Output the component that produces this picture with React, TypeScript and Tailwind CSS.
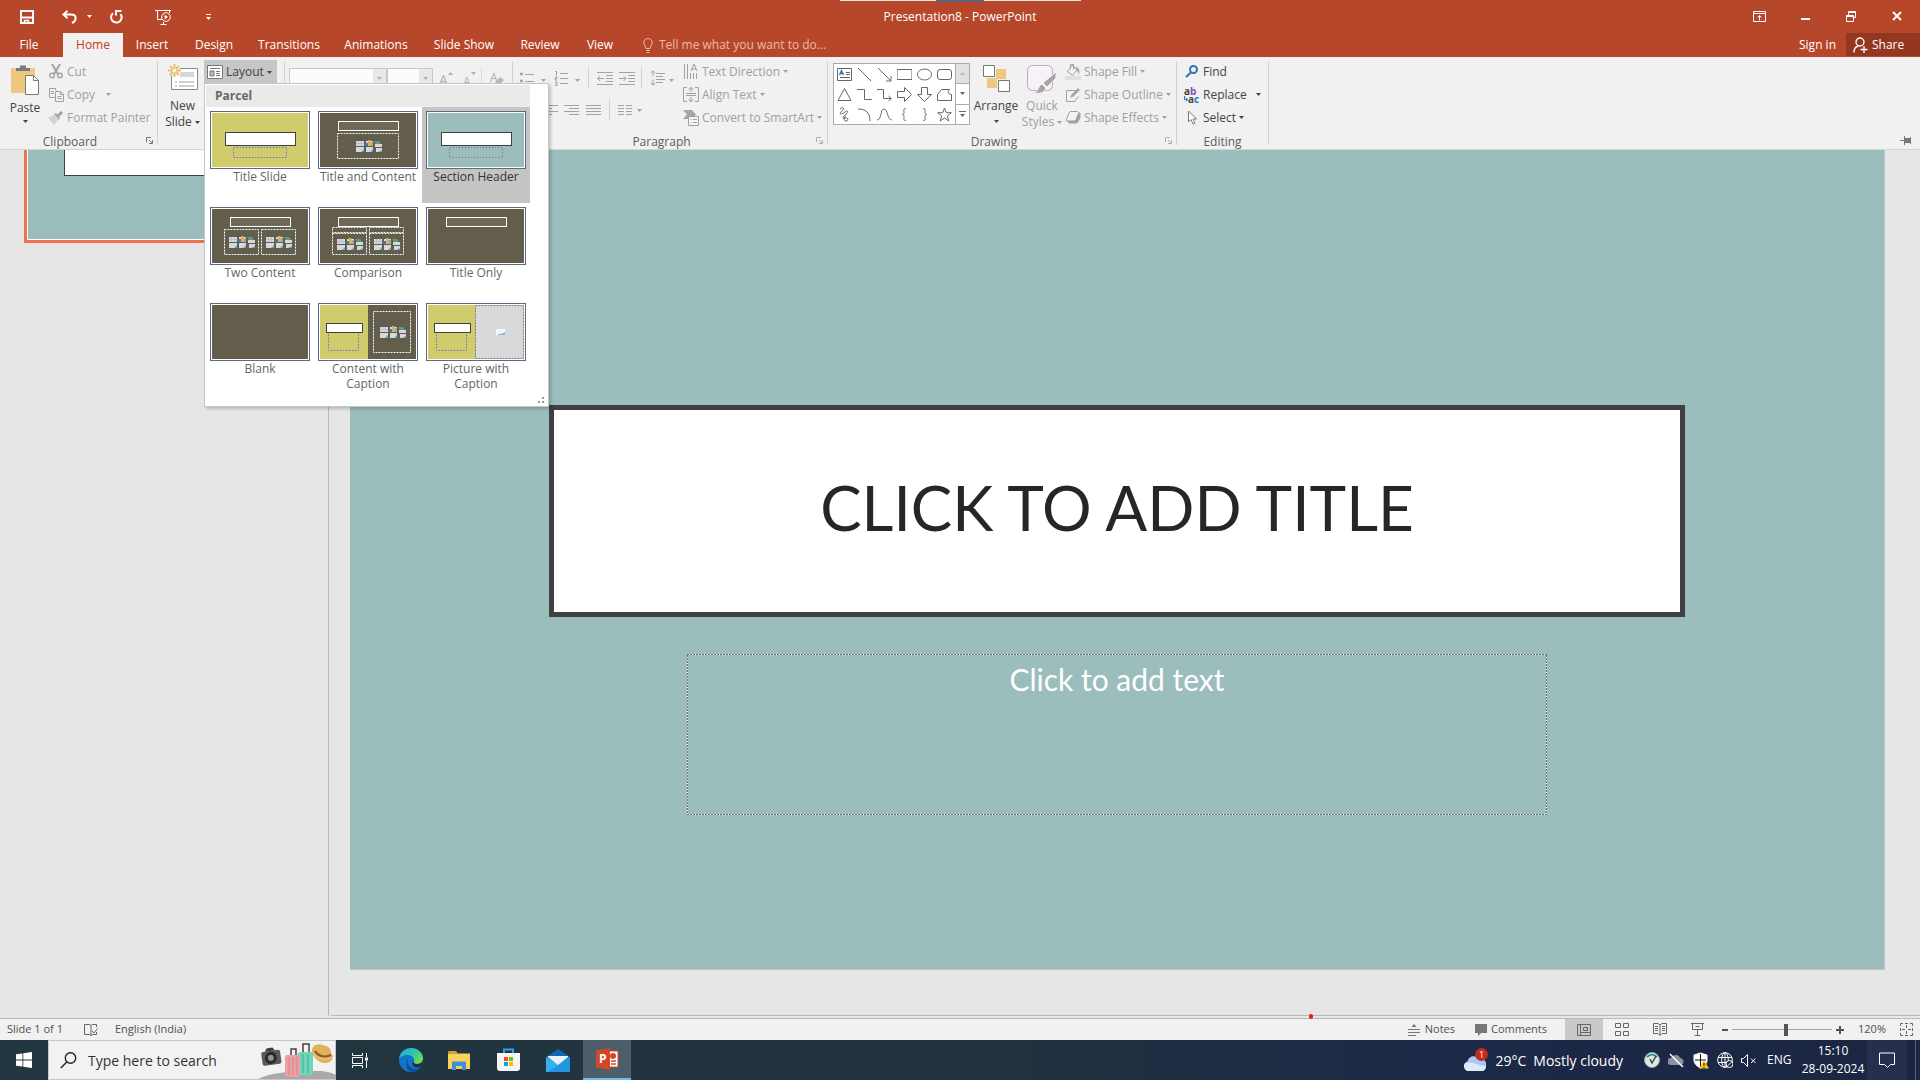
import type { ReactNode } from 'react';

type P = { children?: ReactNode };

function Svg({ w, h, children, stroke = 'currentColor', sw = 1, cls = '' }: P & { w: number; h: number; stroke?: string; sw?: number; cls?: string }) {
  return (
    <svg width={w} height={h} viewBox={`0 0 ${w} ${h}`} fill="none" stroke={stroke} strokeWidth={sw} className={`shrink-0 ${cls}`} aria-hidden="true">
      {children}
    </svg>
  );
}

function Caret({ cls = '' }: { cls?: string }) {
  return (
    <svg width="5" height="3" viewBox="0 0 5 3" className={`shrink-0 ${cls}`} aria-hidden="true">
      <path d="M0 0h5L2.5 3z" fill="currentColor" />
    </svg>
  );
}

function Launcher() {
  return (
    <Svg w={7} h={7}>
      <path d="M.5 5V.5H5M3 3l3 3M6.5 3v3.5H3" />
    </Svg>
  );
}

/* ---------- title bar and tabs ---------- */

function TitleBar() {
  return (
    <header className="relative grid h-[33px] shrink-0 grid-cols-[1fr_auto_1fr] items-center bg-[#b7472a] text-white">
      <div className="absolute left-[840px] top-0 flex h-px w-[241px] bg-[#e4e4e4]">
        <span className="ml-[96px] h-px w-12 bg-[#0a78d7]" />
      </div>
      <div className="flex items-center pl-5">
        <button aria-label="Save" className="mr-7">
          <Svg w={14} h={14} sw={2}>
            <path d="M1 1h12v12H1zM1 7.5h12" />
            <path d="M4.5 13v-2.5h4V13" strokeWidth="1.5" />
          </Svg>
        </button>
        <button aria-label="Undo" className="mr-[10px]">
          <Svg w={15} h={14} sw={2}>
            <path d="M5.5.8L1.5 4.500l4 3.700M2 4.500h7c6 0 6 6 1 8.500" />
          </Svg>
        </button>
        <button aria-label="Undo options" className="mr-[17px]"><Caret /></button>
        <button aria-label="Repeat" className="mr-[32px]">
          <Svg w={14} h={14} sw={2}>
            <path d="M4 3.200A5.300 5.300 0 1 0 11.500 4M7 5.500V1h5.500" />
          </Svg>
        </button>
        <button aria-label="Start from beginning" className="mr-[34px]">
          <Svg w={17} h={16}>
            <path d="M0 1.500h16M2.500 2v8.500H7M8.500 13v2M5.500 15.500h6M14.500 2v2" />
            <circle cx="11" cy="8" r="4.300" />
            <path d="M9.700 5.800v4.400L13 8z" fill="currentColor" stroke="none" />
          </Svg>
        </button>
        <button aria-label="Customize quick access" className="flex flex-col gap-[2px]">
          <span className="h-px w-[5px] bg-white" />
          <Caret />
        </button>
      </div>
      <h1 className="text-[12px]">Presentation8 - PowerPoint</h1>
      <div className="flex justify-end">
        <button aria-label="Ribbon display options" className="flex w-[46px] justify-center">
          <Svg w={13} h={11}>
            <path d="M.5.5h12v10H.5zM.5 2.500h12M6.500 9.500V5M4.500 6.500l2-2 2 2" />
          </Svg>
        </button>
        <button aria-label="Minimize" className="flex w-[46px] justify-center">
          <Svg w={9} h={11} sw={2}><path d="M0 8h9" /></Svg>
        </button>
        <button aria-label="Restore" className="flex w-[46px] justify-center">
          <Svg w={10} h={11}>
            <path d="M.5 4.500h7v6h-7zM2.500 4V.5h7v6H8M.5 5.500h7M2.500 1.500h7" />
          </Svg>
        </button>
        <button aria-label="Close" className="flex w-[46px] justify-center">
          <Svg w={10} h={10} sw={2}><path d="M1 1l8 8M9 1l-8 8" /></Svg>
        </button>
      </div>
    </header>
  );
}

const tabs = [
  { name: 'File', cls: 'w-[58px] mr-[5px]' },
  { name: 'Home', cls: 'w-[60px] bg-[#f1f1f1] text-[#c43e1c]' },
  { name: 'Insert', cls: 'w-[58px]' },
  { name: 'Design', cls: 'w-[66px]' },
  { name: 'Transitions', cls: 'w-[84px]' },
  { name: 'Animations', cls: 'w-[90px]' },
  { name: 'Slide Show', cls: 'w-[86px]' },
  { name: 'Review', cls: 'w-[66px]' },
  { name: 'View', cls: 'w-[54px]' },
];

function TabRow() {
  return (
    <nav className="flex h-6 shrink-0 bg-[#b7472a] text-[12px] text-white">
      {tabs.map((t) => (
        <button key={t.name} className={`shrink-0 ${t.cls}`}>{t.name}</button>
      ))}
      <label className="ml-4 flex items-center gap-[6px] text-[#efb9a8]">
        <Svg w={10} h={15}>
          <path d="M3 10.500C3 8.500.8 7.500.8 4.700a4.200 4.200 0 0 1 8.400 0C9.200 7.500 7 8.500 7 10.500zM3 12.500h4M3.500 14.500h3" />
        </Svg>
        <input aria-label="Tell me" placeholder="Tell me what you want to do..." className="w-[200px] bg-transparent outline-none placeholder:text-[#efb9a8]" />
      </label>
      <div className="ml-auto flex">
        <button className="px-[10px]">Sign in</button>
        <button className="mb-px flex w-[74px] items-center gap-1 bg-[#943721] pl-[7px]">
          <Svg w={15} h={16} sw={1.300}>
            <circle cx="7" cy="5" r="4" />
            <path d="M1 15.500c0-4 2-6 4.500-6.500M11 9v7M7.500 12.500h7" />
          </Svg>
          Share
        </button>
      </div>
    </nav>
  );
}

/* ---------- ribbon ---------- */

function Group({ label, cls, labelCls = '', launcher = '', children }: P & { label: string; cls: string; labelCls?: string; launcher?: string }) {
  return (
    <section className={`flex shrink-0 flex-col pt-[3px] ${cls}`}>
      <div className="flex h-[69px]">{children}</div>
      <div className="relative mt-auto h-4 text-center leading-[18px] text-[#5c5c5c]">
        <span className={labelCls}>{label}</span>
        {launcher && (
          <button aria-label={`${label} options`} className={`absolute right-1 top-1 ${launcher}`}><Launcher /></button>
        )}
      </div>
    </section>
  );
}

const Sep = () => <div className="my-1 w-px shrink-0 bg-[#d2d2d2]" />;

function Row({ icon, text, caret, cls = 'text-[#a0a0a0]', caretCls = '' }: { icon: ReactNode; text: string; caret?: boolean; cls?: string; caretCls?: string }) {
  return (
    <button className={`flex h-[23px] items-center whitespace-nowrap ${cls}`}>
      <span className="mr-[3px] flex w-4 justify-center">{icon}</span>
      {text}
      {caret && <Caret cls={caretCls || 'ml-[3px]'} />}
    </button>
  );
}

function Clipboard() {
  return (
    <Group label="Clipboard" cls="w-[157px]" labelCls="mr-[17px]" launcher="text-[#777]">
      <button className="flex w-[48px] flex-col items-center pt-1 pl-[2px] text-[#444]">
        <Svg w={28} h={32}>
          <path d="M0 4h24v25H0z" fill="#edc87e" stroke="none" />
          <path d="M5 7V4h4V1.500h6V4h4v3z" fill="#7b7b7b" stroke="none" />
          <path d="M14.500 11.500h8l5 5v14h-13z" fill="#fff" stroke="#777" />
          <path d="M22.500 11.500v5h5" stroke="#777" />
        </Svg>
        <span className="mt-1 leading-4">Paste</span>
        <Caret cls="mt-1" />
      </button>
      <div>
        <Row
          text="Cut"
          icon={
            <Svg w={14} h={15} sw={1.300}>
              <path d="M3 0l6 10M11 0L5 10" strokeWidth="2" />
              <circle cx="3" cy="11.500" r="2.300" /><circle cx="11" cy="11.500" r="2.300" />
            </Svg>
          }
        />
        <Row
          text="Copy" caret caretCls="ml-[11px]"
          icon={
            <Svg w={15} h={14}>
              <path d="M7 .5H.5v9H6M.5.5h5l2 2M6.500 3.500h5l3 3v7h-8zM11.500 3.500v3h3M2 3.500h3M2 5.500h3M8.500 8.500h4M8.500 10.500h4" />
            </Svg>
          }
        />
        <Row
          text="Format Painter"
          icon={
            <Svg w={16} h={14}>
              <path d="M0 7l6-3 4 5-4 5z" fill="#d6d0d6" stroke="none" />
              <path d="M6 3l2-1 4 5-1.500 2z" fill="#aaa" stroke="none" />
              <path d="M10 5l4-4" strokeWidth="3" />
            </Svg>
          }
        />
      </div>
    </Group>
  );
}

function Slides() {
  return (
    <Group label="" cls="w-[126px]">
      <button className="flex w-[46px] flex-col items-center pt-1 pl-[3px] text-[#444]">
        <Svg w={30} h={28}>
          <path d="M3.500 4.500h26v21h-26z" fill="#fff" stroke="#8a8a8a" />
          <path d="M12 8h14v5H12z" fill="#d8d8d8" stroke="none" />
          <path d="M7 18h2M11 18h15M7 22h2M11 22h15" stroke="#a0a0a0" />
          <circle cx="6.500" cy="6.500" r="6" fill="#f1f1f1" stroke="none" />
          <path d="M6.500 0v13M0 6.500h13M2 2l9 9M11 2l-9 9" stroke="#efbd61" strokeWidth="1.800" />
          <circle cx="6.500" cy="6.500" r="2" fill="#f1f1f1" stroke="none" />
        </Svg>
        <span className="mt-1.5 leading-4">New</span>
        <span className="flex items-center gap-[3px] leading-4">Slide<Caret /></span>
      </button>
      <button className="flex h-[24px] w-[73px] items-center bg-[#c6c6c6] pl-[3px] text-[#444]">
        <Svg w={16} h={14} stroke="#777">
          <path d="M.5.500h15v13H.5z" fill="#fff" />
          <path d="M3 3.500h10M3 6h4v5H3z" fill="#bbb" />
          <path d="M9 6.500h4M9 8.500h4M9 10.500h4" />
        </Svg>
        <span className="ml-[3px] mr-[3px]">Layout</span><Caret />
      </button>
    </Group>
  );
}

function FontGroup() {
  return (
    <Group label="" cls="w-[227px]">
      <div className="flex h-7 items-start pt-2 pl-1 text-[#b0b0b0]">
        <div className="relative flex h-5 w-[98px] items-center border border-[#c8c8c8] bg-[#fcfcfc]">
          <select aria-label="Font" className="h-full w-full appearance-none" />
          <span className="pointer-events-none absolute right-0 flex h-full w-[13px] items-center justify-center bg-[#e8e8e8]"><Caret /></span>
        </div>
        <div className="relative flex h-5 w-[46px] items-center border border-[#c8c8c8] bg-[#fcfcfc]">
          <select aria-label="Font size" className="h-full w-full appearance-none" />
          <span className="pointer-events-none absolute right-0 flex h-full w-[13px] items-center justify-center bg-[#e8e8e8]"><Caret /></span>
        </div>
        <button aria-label="Increase font size" className="ml-[6px] mt-1 flex w-6 items-start text-[14px] leading-4">A<Svg w={5} h={3}><path d="M0 3l2.500-3L5 3z" fill="currentColor" stroke="none" /></Svg></button>
        <button aria-label="Decrease font size" className="mt-1 flex w-[18px] items-start text-[12px] leading-5">A<Caret /></button>
        <span className="h-5 w-px bg-[#d8d8d8]" />
        <button aria-label="Clear formatting" className="ml-2 mt-1 flex text-[12px] leading-3">A<Svg w={10} h={10} cls="-ml-1 mt-1"><path d="M1 6l5-5 4 3-5 5z" fill="#b8b8b8" stroke="none" /></Svg></button>
      </div>
    </Group>
  );
}

const lines = (w: number[], x = 0) => w.map((n, i) => <path key={i} d={`M${x} ${i * 3 + 0.5}h${n}`} />);

function Paragraph() {
  return (
    <Group label="Paragraph" cls="w-[314px]" labelCls="ml-[-17px]" launcher="text-[#b0b0b0]">
      <div className="w-[170px] shrink-0 pl-[7px] text-[#a3a3a3]">
        <div className="flex h-9 items-center">
          <Svg w={15} h={13}><path d="M0 2h3M0 9h3" strokeWidth="2.500" /><path d="M5 2.500h9M5 9.500h9" /></Svg>
          <Caret cls="ml-[6px] mt-1" />
          <Svg w={15} h={17} cls="ml-2">
            <path d="M6 3.500h8M6 8.500h8M6 13.500h8M1 1.500h1.500v4M1 7h2v1.500H1V10h2M1 12h2v3.500H1M1.500 13.500H3" />
          </Svg>
          <Caret cls="ml-[6px] mt-1" />
          <span className="mx-2 h-[22px] w-px bg-[#d2d2d2]" />
          <Svg w={16} h={13}><path d="M0 .5h16M9 3.500h7M9 6.500h7M9 9.500h7M0 12.500h16M0 6.500h7M3 4L.7 6.500 3 9" /></Svg>
          <Svg w={16} h={13} cls="ml-[6px]"><path d="M0 .5h16M9 3.500h7M9 6.500h7M9 9.500h7M0 12.500h16M0 6.500h7M4.500 4L7 6.500 4.500 9" /></Svg>
          <span className="mx-[6px] h-[22px] w-px shrink-0 bg-[#d2d2d2]" />
          <Svg w={15} h={16} cls="ml-[2px]"><path d="M6 3.500h9M6 6.500h7M6 9.500h9M6 12.500h7M3 1v5.500M.7 3L3 .8 5.300 3M3 9.500V15M.7 13L3 15.200 5.300 13" /></Svg>
          <Caret cls="ml-[4px] mt-1" />
        </div>
        <div className="flex h-7 items-center pl-[24px]">
          <Svg w={14} h={11}>{lines([14, 8, 14, 8])}</Svg>
          <Svg w={15} h={11} cls="ml-[6px]"><path d="M0 .5h15M5 3.500h10M0 6.500h15M5 9.500h10" /></Svg>
          <Svg w={15} h={11} cls="ml-[7px]"><path d="M0 .5h15M0 3.500h15M0 6.500h15M0 9.500h15" /></Svg>
          <span className="mx-2 h-[22px] w-px bg-[#d2d2d2]" />
          <Svg w={14} h={11}><path d="M0 .5h6M0 3.500h6M0 6.500h6M0 9.500h6M8 .5h6M8 3.500h6M8 6.500h6M8 9.500h6" /></Svg>
          <Caret cls="ml-[5px]" />
        </div>
      </div>
      <div>
        <Row text="Text Direction" caret icon={
          <Svg w={16} h={15}><path d="M1.500 0v15M4.500 0v15M7.500 9v6M10.500 9v6M13.500 9v6M8 7l3-7 3 7M9 5h4" /></Svg>
        } />
        <Row text="Align Text" caret icon={
          <Svg w={16} h={15}><path d="M4 .5H.5v14H4M12 .5h3.500v14H12M3 6.500h10M3 8.500h10M8 0v5M5.500 2.500L8 .5l2.500 2M8 10v5M5.500 12.500L8 14.500l2.500-2" /></Svg>
        } />
        <Row text="Convert to SmartArt" caret icon={
          <Svg w={16} h={16}>
            <path d="M0 0h9l4 4.500-4 4.500H0l4-4.500z" fill="#a6a6a6" stroke="none" />
            <path d="M5.500 6.500h10v9h-10z" fill="#f6f6f6" /><path d="M7.500 9.500h1M10 9.500h4M7.500 12.500h1M10 12.500h4" />
          </Svg>
        } />
      </div>
    </Group>
  );
}

const shapes: { name: string; art: ReactNode }[] = [
  { name: 'Text box', art: <><path d="M.5 1.500h14v12H.5zM9 5.500h4M9 7.500h4M3 10.500h10" /><path d="M2.500 8L4.500 3.500 6.500 8M3.500 6.500h2" stroke="#2b73b8" strokeWidth="1.300" /></> },
  { name: 'Line', art: <path d="M1 1l13 13" /> },
  { name: 'Arrow', art: <path d="M1 1l13 13M14 9v5H9" /> },
  { name: 'Rectangle', art: <path d="M0 2.500h15v10H0z" /> },
  { name: 'Oval', art: <ellipse cx="7.500" cy="7.500" rx="7" ry="5.500" /> },
  { name: 'Rounded rectangle', art: <rect x=".5" y="2.500" width="14" height="10" rx="2.500" /> },
  { name: 'Triangle', art: <path d="M7.500 1.500l6.500 12H1z" /> },
  { name: 'Elbow connector', art: <path d="M0 2.500h7.500v10H15" /> },
  { name: 'Elbow arrow', art: <path d="M0 2.500h6.500v9H14M11.500 9l2.800 2.500-2.800 2.500" /> },
  { name: 'Right arrow', art: <path d="M.5 4.500h7v-4l7 7-7 7v-4h-7z" /> },
  { name: 'Down arrow', art: <path d="M4.500.5v7h-4l7 7 7-7h-4v-7z" /> },
  { name: 'Freeform', art: <path d="M.5 13.500v-6l4-5h8c-2 3-2 4 2 5v6z" /> },
  { name: 'Scribble', art: <path d="M3 2c4-3 5 0 1 3-3 3 2 2 4 0s4-1 1 2-4 5-1 4 4 3 1 3-2-5 0-5" /> },
  { name: 'Arc', art: <path d="M1 2c8 0 12 4 12 12" /> },
  { name: 'Curve', art: <path d="M0 13c5 0 3-11 7-11s3 11 8 11" /> },
  { name: 'Left brace', art: <path d="M9 1.500c-3 0-2 2-2 4 0 1.500-1 2-2 2 1 0 2 .5 2 2 0 2-1 4 2 4" /> },
  { name: 'Right brace', art: <path d="M6 1.500c3 0 2 2 2 4 0 1.500 1 2 2 2-1 0-2 .5-2 2 0 2 1 4-2 4" /> },
  { name: 'Star', art: <path d="M7.500 1l1.800 4.700h5L10.300 9l1.500 5-4.300-3-4.300 3 1.500-5L.7 5.700h5z" /> },
];

function Drawing() {
  return (
    <Group label="Drawing" cls="w-[348px]" labelCls="mr-[16px]" launcher="text-[#b0b0b0]">
      <div className="ml-[5px] mt-[3px] flex h-[62px] w-[137px] shrink-0 border border-[#ababab] bg-white text-[#666]">
        <div className="grid flex-1 grid-cols-6 place-items-center px-px">
          {shapes.map((s) => (
            <button key={s.name} aria-label={s.name}><Svg w={15} h={15}>{s.art}</Svg></button>
          ))}
        </div>
        <div className="flex w-[14px] flex-col divide-y divide-[#ababab] border-l border-[#ababab]">
          <button aria-label="Scroll shapes up" className="flex flex-1 items-center justify-center bg-[#e1e1e1] text-[#b5b5b5]"><Caret cls="rotate-180" /></button>
          <button aria-label="Scroll shapes down" className="flex flex-1 items-center justify-center"><Caret /></button>
          <button aria-label="More shapes" className="flex flex-1 flex-col items-center justify-center gap-[2px]"><span className="h-px w-[7px] bg-[#666]" /><Caret /></button>
        </div>
      </div>
      <button className="ml-[3px] flex w-[46px] shrink-0 flex-col items-center pt-[5px] text-[#444]">
        <Svg w={27} h={27}>
          <path d="M13 4h10v10H13zM4 13h10v10H4z" fill="#edc87e" stroke="none" />
          <path d="M.5.500h11v11H.5zM15.500 15.500h11v11h-11z" fill="#fff" stroke="#777" />
        </Svg>
        <span className="mt-1.5 leading-4">Arrange</span>
        <Caret cls="mt-1.5" />
      </button>
      <button className="flex w-[46px] shrink-0 flex-col items-center pt-[5px] text-[#a0a0a0]">
        <Svg w={30} h={29} stroke="#b5adb5">
          <rect x=".5" y=".5" width="25" height="25" rx="5" fill="#f8f1f8" />
          <path d="M29 7v6l-9 9-4-4z" fill="#a8a3a8" stroke="#f1f1f1" />
          <path d="M15 19l4 4c-2 5-6 6-12 5 5-2 4-7 8-9z" fill="#a8a3a8" stroke="#f1f1f1" />
        </Svg>
        <span className="mt-1 leading-4">Quick</span>
        <span className="flex items-center gap-[3px] leading-4">Styles<Caret /></span>
      </button>
      <div>
        <Row text="Shape Fill" caret icon={
          <Svg w={16} h={16}><path d="M0 12h16v4H0z" fill="#e2dde2" stroke="none" /><path d="M7 1.500L2.500 7.500l5 4 5-6zM5.500 5V.5h3v5" /><path d="M10 3c4 0 5 3 4 8-1-3-1-4-3-5z" fill="#a5a5a5" stroke="none" /></Svg>
        } />
        <Row text="Shape Outline" caret icon={
          <Svg w={16} h={14}><path d="M11 2.500H1.500v11h8l4-5" /><path d="M5 10l1.500-3.500L13 0l2 2-6.500 6.500z" fill="#a5a5a5" stroke="none" /></Svg>
        } />
        <Row text="Shape Effects" caret icon={
          <Svg w={16} h={14}><path d="M3 9l3-7h9v5l-3 5H4z" fill="#a3a3a3" stroke="#a3a3a3" /><path d="M1 9l3-7c.5-1 1-1.500 2-1.500h6c1 0 2 1 1.500 2L11 8.500c-.5 1-1 1.500-2 1.500H2c-1 0-1-.5-1-1z" fill="#f5f0f5" /></Svg>
        } />
      </div>
    </Group>
  );
}

function Editing() {
  return (
    <Group label="Editing" cls="w-[91px]">
      <div className="pl-[7px]">
        <Row text="Find" cls="text-[#444]" icon={
          <Svg w={14} h={13} stroke="#2f74b5" sw={2}><circle cx="8.500" cy="4.500" r="3.500" /><path d="M6 7.500l-5 4.500" /></Svg>
        } />
        <Row text="Replace" caret caretCls="ml-[9px]" cls="text-[#444]" icon={
          <span className="flex h-4 w-4 flex-col text-[10px] font-bold leading-[8px]" aria-hidden="true">
            <span className="h-2 text-left">a<span className="text-[#8a4fb0]">b</span></span>
            <span className="flex h-2 items-start">
              <Svg w={4} h={6} stroke="#2f74b5" cls="mt-px"><path d="M.5 0v3.500H4M2 1.500l1.500 2-1.500 2" /></Svg>
              <span>a<span className="text-[#2f74b5]">c</span></span>
            </span>
          </span>
        } />
        <Row text="Select" caret cls="text-[#444]" icon={
          <Svg w={10} h={15} stroke="#777"><path d="M1.500 1v11l2.500-2.500L6 14l2-1-2-4h3.500z" fill="#fff" /></Svg>
        } />
      </div>
    </Group>
  );
}

function Ribbon() {
  return (
    <div className="relative z-10 flex h-[93px] shrink-0 border-b border-[#d5d5d5] bg-[#f1f1f1] text-[12px]">
      <Clipboard /><Sep /><Slides /><Sep /><FontGroup /><Sep /><Paragraph /><Sep /><Drawing /><Sep /><Editing /><Sep />
      <button aria-label="Pin the ribbon" className="mb-1 ml-auto mr-[9px] self-end text-[#777]">
        <Svg w={11} h={9}><path d="M0 4.500h4M4.500 0v9M10.500 1v7" /><path d="M5 2.500h5v4H5z" fill="currentColor" /></Svg>
      </button>
      <LayoutMenu />
    </div>
  );
}

/* ---------- layout gallery ---------- */

const DARK = '#635d4b';
const LIME = '#d0cb6b';
const TEAL = '#9bbdbb';

function Media({ x, y }: { x: number; y: number }) {
  return (
    <g transform={`translate(${x} ${y})`}>
      <path d="M0 1h8v5H0zM10 1h7v5h-7zM19 4h7v3h-7zM0 7h8v5H0zM10 7h7v5h-7zM20 8h6v4h-6z" fill="#d5d9dc" />
      <path d="M0 3.500h8M2.500 1v5M5.500 1v5" stroke="#b3aab6" strokeWidth=".5" />
      <path d="M9 3h3v3H9z" fill="#3f78b8" /><path d="M12 0h2.500v6H12z" fill="#e5ae45" />
      <path d="M14.500 2H17v4h-2.500z" fill="#a8a5a0" />
      <path d="M18 1h5l2 3h-5z" fill="#5d9c83" />
      <path d="M2 12h3l3-3v3zM11 12h3l3-3v3zM22 12l4-2v2z" fill="#6fa0c8" />
    </g>
  );
}

function Dots({ x, y, w, h, c = '#fff' }: { x: number; y: number; w: number; h: number; c?: string }) {
  return (
    <g fill="none">
      <rect x={x + 0.5} y={y + 0.5} width={w} height={h} stroke={c === '#fff' ? '#4d4d4d' : '#e8eaea'} />
      <rect x={x + 0.5} y={y + 0.5} width={w} height={h} stroke={c} strokeDasharray="2 1" />
    </g>
  );
}

const Title = ({ x, y, w, h }: { x: number; y: number; w: number; h: number }) => (
  <rect x={x + 0.5} y={y + 0.5} width={w} height={h} fill="#fff" stroke="#404040" />
);
const DarkTitle = () => <rect x="20.500" y="10.500" width="60" height="9" fill="#6f6858" stroke="#fff" />;

const layouts: { name: string; bg: string; on?: boolean; art: ReactNode }[] = [
  { name: 'Title Slide', bg: LIME, art: <><Title x={15} y={21} w={70} h={13} /><Dots x={23} y={36} w={53} h={10} c="#777" /></> },
  { name: 'Title and Content', bg: DARK, art: <><DarkTitle /><Dots x={19} y={22} w={61} h={25} /><Media x={38} y={29} /></> },
  { name: 'Section Header', bg: TEAL, on: true, art: <><Title x={15} y={21} w={70} h={13} /><Dots x={23} y={36} w={53} h={10} c="#777" /></> },
  { name: 'Two Content', bg: DARK, art: <><DarkTitle /><Dots x={14} y={22} w={34} h={25} /><Dots x={51} y={22} w={34} h={25} /><Media x={19} y={29} /><Media x={56} y={29} /></> },
  { name: 'Comparison', bg: DARK, art: <><DarkTitle /><Dots x={14} y={20} w={34} h={5} /><Dots x={51} y={20} w={34} h={5} /><Dots x={14} y={26} w={34} h={21} /><Dots x={51} y={26} w={34} h={21} /><Media x={19} y={31} /><Media x={56} y={31} /></> },
  { name: 'Title Only', bg: DARK, art: <DarkTitle /> },
  { name: 'Blank', bg: DARK, art: null },
  { name: 'Content with Caption', bg: DARK, art: <><path d="M2 2h48v54H2z" fill={LIME} /><Dots x={10} y={28} w={30} h={19} c="#777" /><Title x={8} y={20} w={36} h={9} /><Dots x={55} y={8} w={37} h={41} /><Media x={62} y={23} /></> },
  { name: 'Picture with Caption', bg: LIME, art: <><path d="M49 2h49v54H49z" fill="#d9d9d9" /><Dots x={49} y={2} w={48} h={53} c="#777" /><Dots x={10} y={28} w={30} h={19} c="#777" /><Title x={8} y={20} w={36} h={9} /><path d="M70 26h9v6h-9z" fill="#f4f6f8" /><path d="M72 31h3l4-2v3h-7z" fill="#8fb5dc" /></> },
];

function LayoutMenu() {
  return (
    <div className="absolute left-[204px] top-[26px] w-[345px] border border-[#c6c6c6] bg-white p-px pb-[11px] shadow-[2px_2px_3px_rgba(0,0,0,0.2)]">
      <div className="w-[324px]">
        <h2 className="h-[22px] bg-[#eaeaea] pl-[9px] font-bold leading-[22px] text-[#686868]">Parcel</h2>
        <div className="grid grid-cols-3">
          {layouts.map((l) => (
            <button key={l.name} className={`flex h-24 flex-col items-center pt-1 leading-[15px] ${l.on ? 'bg-[#c5c5c5] text-[#333]' : 'text-[#666]'}`}>
              <svg width="100" height="58" viewBox="0 0 100 58" className="shrink-0" aria-hidden="true">
                <rect x=".5" y=".5" width="99" height="57" fill="#fff" stroke="#5f6a82" />
                <rect x="2" y="2" width="96" height="54" fill={l.bg} />
                {l.art}
              </svg>
              <span className={l.name.length > 17 ? 'w-20' : 'whitespace-nowrap'}>{l.name}</span>
            </button>
          ))}
        </div>
      </div>
      <svg width="6" height="6" viewBox="0 0 6 6" className="absolute bottom-[3px] right-1" fill="#999" aria-hidden="true">
        <path d="M4 0h2v2H4zM0 4h2v2H0zM4 4h2v2H4z" />
      </svg>
    </div>
  );
}

/* ---------- workspace ---------- */

function Workspace() {
  return (
    <div className="relative flex min-h-0 flex-1 border-b border-[#b9b9b9] bg-[#e6e6e6] pb-[2px]">
      <aside className="w-[329px] shrink-0 border-r border-[#b9b9b9]">
        <button aria-label="Slide 1" className="ml-6 block w-[284px] border-[3px] border-t-0 border-[#f1704f]">
          <span className="block border border-t-0 border-white bg-[#9bbdbb] pb-[63px] pl-9 pr-9">
            <span className="block h-[26px] border border-t-0 border-[#404040] bg-white" />
          </span>
        </button>
      </aside>
      <main className="ml-[2px] flex flex-1 border-b border-[#b9b9b9] pb-[45px] pl-[19px] pr-[35px]">
        <div className="flex flex-1 flex-col border-b border-r border-[#c4c4c4] bg-[#9bbdbb] pt-[255px]">
          <h2 className="mx-[13%] flex h-[212px] items-center justify-center border-[5px] border-[#404040] bg-white pb-2 font-['Lato'] text-[62px] leading-[72px] text-[#262626]">
            CLICK TO ADD TITLE
          </h2>
          <div className="mx-[22%] mt-[37px] bg-[repeating-linear-gradient(90deg,#707070_0_2px,#fff_2px_3px)] py-px">
            <div className="bg-[repeating-linear-gradient(180deg,#707070_0_2px,#fff_2px_3px)] px-px">
              <p className="h-[159px] bg-[#9bbdbb] pt-1 text-center font-['Lato'] text-[30px] leading-10 text-white">Click to add text</p>
            </div>
          </div>
        </div>
      </main>
      <span className="absolute -bottom-px left-[68.2%] z-10 h-[5px] w-1 rounded-full bg-[#e0201c]" />
    </div>
  );
}

function StatusBar() {
  return (
    <footer className="flex h-[21px] shrink-0 items-center bg-[#f1f1f1] pl-[7px] text-[11px] text-[#505050]">
      <span className="w-[77px]">Slide 1 of 1</span>
      <button aria-label="Spelling" className="mr-[17px] text-[#666]">
        <Svg w={14} h={12}><path d="M7 11.500L5.500 10.500H.5V.5h5L7 1.500v10M7 1.500L8.500.5h4V3M8 7l2 2 3.500-4.500M7 11.500l1.500-1h4V8" /></Svg>
      </button>
      <span>English (India)</span>
      <div className="ml-auto flex items-center text-[#666]">
        <button className="mr-5 flex items-center gap-[5px] text-[#505050]">
          <Svg w={12} h={12} stroke="#777"><path d="M0 5.500h12M0 8.500h12M0 11.500h8" /><path d="M3.500 3L6 0l2.500 3z" fill="#777" stroke="none" /></Svg>
          Notes
        </button>
        <button className="mr-[18px] flex items-center gap-1 text-[#505050]">
          <Svg w={12} h={12}><path d="M0 0h12v9H6l-3 3V9H0z" fill="#777" stroke="none" /></Svg>
          Comments
        </button>
        <button aria-label="Normal view" className="flex h-[21px] w-[38px] items-center justify-center bg-[#c9c9c9]">
          <Svg w={14} h={12}><path d="M.5.5h13v11H.5zM3.500.5v11M3.500 8.500h10M6.500 3.500h4v3h-4z" /></Svg>
        </button>
        <button aria-label="Slide sorter" className="flex w-[38px] justify-center">
          <Svg w={14} h={13}><path d="M.5.5h5v4h-5zM8.500.5h5v4h-5zM.5 8.500h5v4h-5zM8.500 8.500h5v4h-5z" /></Svg>
        </button>
        <button aria-label="Reading view" className="flex w-[37px] justify-center">
          <Svg w={14} h={13}><path d="M7 12.500L5 10.500H.5V.5H5L7 2l2-1.500h4.500v10H9zM7 2v10M2 3.500h3M2 5.500h3M2 7.500h3M9 3.500h3M9 5.500h3M9 7.500h3" /></Svg>
        </button>
        <button aria-label="Slide show" className="flex w-[38px] justify-center">
          <Svg w={13} h={13}><path d="M0 .5h13M1.500.5v6h10v-6M6.500 6.500v6M3.500 12.500h6M4.500 3.500h4" /></Svg>
        </button>
        <button aria-label="Zoom out" className="ml-[6px] h-[2px] w-[6px] bg-[#555]" />
        <input
          type="range" aria-label="Zoom" min="0" max="100" defaultValue="54"
          className="mx-1 h-3 w-[100px] appearance-none bg-[linear-gradient(#a5a5a5,#a5a5a5)] bg-[length:100%_1px] bg-center bg-no-repeat [&::-webkit-slider-thumb]:h-3 [&::-webkit-slider-thumb]:w-1 [&::-webkit-slider-thumb]:appearance-none [&::-webkit-slider-thumb]:bg-[#555]"
        />
        <button aria-label="Zoom in"><Svg w={8} h={8} sw={2} stroke="#555"><path d="M0 4h8M4 0v8" /></Svg></button>
        <button className="ml-[14px] w-7 text-[#505050]">120%</button>
        <button aria-label="Fit slide to window" className="ml-[14px] mr-[7px]">
          <Svg w={13} h={13}><path d="M.5 3V.5H3M5 .5h3M10 .5h2.500V3M12.500 5v3M12.500 10v2.500H10M8 12.500H5M3 12.500H.5V10M.5 8V5M6.500 2v3M6.500 8v3M2 6.500h3M8 6.500h3" /></Svg>
        </button>
      </div>
    </footer>
  );
}

/* ---------- taskbar ---------- */

function TravelArt() {
  return (
    <Svg w={78} h={38} stroke="none">
      <path d="M0 38c12-6 30-8 60-8 8 0 14 2 18 4v4z" fill="#a9a9ad" />
      <g transform="rotate(-8 12 18)">
        <rect x="4" y="10" width="19" height="14" rx="2" fill="#5a5a5c" /><path d="M8 10l2-3h6l2 3z" fill="#3c3c3e" />
        <circle cx="13" cy="17" r="6" fill="#2a2a2c" /><circle cx="13" cy="17" r="3" fill="#8b9298" />
      </g>
      <path d="M45 11V3h6v8" stroke="#444" strokeWidth="1.500" fill="none" />
      <rect x="40" y="11" width="15" height="23" rx="2" fill="#6fd6b8" /><path d="M45 13v19M50 13v19" stroke="#45ad93" />
      <path d="M33 14V8h5v6" stroke="#444" strokeWidth="1.500" fill="none" />
      <rect x="27" y="14" width="15" height="22" rx="2" fill="#eba0a4" /><path d="M31 16v18M35 16v18M39 16v18" stroke="#d2868b" />
      <path d="M54 10c-1-5 6-8 11-6 5 1 8 3 8 8 4 4 1 9-4 10-7 1-14-5-15-12z" fill="#e0b25c" />
      <path d="M57 10c3 5 9 7 16 4" stroke="#8b5a25" strokeWidth="2" fill="none" />
      <path d="M56 13c3 5 11 7 18 3" stroke="#f0cf85" strokeWidth="1" fill="none" />
    </Svg>
  );
}

function Taskbar() {
  return (
    <div className="flex h-10 shrink-0 items-stretch bg-[linear-gradient(90deg,#22373f,#21333f_50%,#1c2947_75%,#1b2642)] text-[14px] text-white">
      <button aria-label="Start" className="flex w-12 items-center justify-center">
        <Svg w={16} h={16} stroke="none"><path d="M0 2.300l6.500-.9v6.200H0zM7.300 1.300L16 0v7.600H7.300zM0 8.400h6.500v6.200L0 13.700zM7.300 8.400H16V16l-8.700-1.300z" fill="#fff" /></Svg>
      </button>
      <label className="flex w-[288px] shrink-0 items-center border border-[#c4c8ca] bg-[#f2f2f2] pl-[11px] text-[#222]">
        <Svg w={17} h={17} sw={1.400}><circle cx="10.500" cy="6" r="5.200" /><path d="M6.800 10L.8 16" /></Svg>
        <input aria-label="Search" placeholder="Type here to search" className="ml-[11px] w-[170px] bg-transparent text-[14px] outline-none placeholder:text-[#333]" />
        <TravelArt />
      </label>
      <button aria-label="Task view" className="flex w-[50px] items-center justify-center pr-px">
        <Svg w={17} h={15}><path d="M.5 0v2.500h10V0M.5 4.500h10v6H.5zM.5 15v-2.500h10V15M14.500 0v4M14.500 8v7" /><path d="M13 4.500h3v3h-3z" fill="#fff" stroke="none" /></Svg>
      </button>
      <button aria-label="Edge" className="flex w-[49px] items-center justify-center">
        <Svg w={24} h={24} stroke="none">
          <defs>
            <linearGradient id="eg" x1="0" y1="0" x2="1" y2=".6"><stop offset="0" stopColor="#2aa5df" /><stop offset=".6" stopColor="#32c3b3" /><stop offset="1" stopColor="#6ddb4e" /></linearGradient>
          </defs>
          <circle cx="12" cy="12" r="12" fill="#1576c8" />
          <path d="M0 11C1 4 6 0 12 0c7 0 12 5 12 10 0 4-3 6-6 6-3 0-4-1-3-3 1-3-2-6-6-6-5 0-8 2-9 4z" fill="url(#eg)" />
          <path d="M9 10c-2 5 2 11 8 11 2 0 4-1 5-2-2 4-6 5-9 5C7 24 6 15 9 10z" fill="#0f4f9e" />
          <path d="M15 13c-1 2 0 3 3 3 2 0 5-1 6-4 0 3-1 5-2 7-3 1-6 1-8-1-1-2-1-4 1-5z" fill="#21343f" />
        </Svg>
      </button>
      <button aria-label="File Explorer" className="flex w-12 items-center justify-center">
        <Svg w={22} h={19} stroke="none">
          <path d="M0 1.500C0 .5.500 0 1.500 0H8l2 2.500H0z" fill="#e0a020" /><path d="M0 2.500h22V18H0z" fill="#fbd15c" />
          <path d="M4 19v-7c0-1 .500-1.500 1.500-1.500h11c1 0 1.500.5 1.500 1.500v7h-4v-4H8v4z" fill="#3d8fd9" />
        </Svg>
      </button>
      <button aria-label="Microsoft Store" className="flex w-[50px] items-center justify-center">
        <Svg w={23} h={24} stroke="none">
          <path d="M7 6V1.500h9V6" stroke="#2aa5e8" strokeWidth="2" /><path d="M0 5h23v15c0 2-1 3-3 3H3c-2 0-3-1-3-3z" fill="#f5f5f5" />
          <path d="M7 9h4v4H7z" fill="#f25022" /><path d="M12 9h4v4h-4z" fill="#7fba00" /><path d="M7 14h4v4H7z" fill="#00a4ef" /><path d="M12 14h4v4h-4z" fill="#ffb900" />
        </Svg>
      </button>
      <button aria-label="Mail" className="flex w-[50px] items-center justify-center">
        <Svg w={24} h={23} stroke="none">
          <path d="M0 8l12-8 12 8v14H0z" fill="#1565b5" /><path d="M2 7h20v1L12 15 2 8z" fill="#e8f2fa" /><path d="M0 8l12 7 12-7v15H0z" fill="#35b0ee" /><path d="M24 8v15H2z" fill="#1f96de" /><path d="M2 8h20l-10 8z" fill="#e8f2fa" />
        </Svg>
      </button>
      <button aria-label="PowerPoint" className="flex w-12 items-center justify-center border-b-2 border-[#76b9ed] bg-[#4c5f68]">
        <svg width="23" height="22" viewBox="0 0 23 22" aria-hidden="true">
          <path d="M13 3h9v16h-9z" fill="#fff" stroke="#d24726" /><path d="M15 13h5M15 16h5" stroke="#d24726" strokeWidth="1.500" /><circle cx="17" cy="8" r="3" fill="#d24726" />
          <path d="M0 2.500L14 0v22L0 19.500z" fill="#d24726" /><text x="3" y="15" fontSize="12" fontWeight="bold" fill="#fff">P</text>
        </svg>
      </button>
      <div className="ml-auto flex items-center">
        <button className="mr-[21px] flex items-center gap-[7px] whitespace-nowrap">
          <svg width="25" height="24" viewBox="0 0 25 24" aria-hidden="true">
            <path d="M5 23a5 5 0 0 1-.5-9.500C5 8 13 6 16 11c5-1 8 3 7 7 0 3-2 5-4 5z" fill="#a9c9f5" />
            <path d="M5 23a5 5 0 0 1-3-8c5-3 15 3 21 3 0 3-2 5-4 5z" fill="#dce9fb" />
            <circle cx="18.500" cy="6.500" r="6.500" fill="#c42b1c" /><text x="16" y="10" fontSize="9" fill="#fff">1</text>
          </svg>
          <span>29°C</span><span>Mostly cloudy</span>
        </button>
        <div className="flex items-center gap-2">
          <Svg w={16} h={16}><circle cx="8" cy="8" r="7.500" fill="#dfe7e9" stroke="#8aa" /><path d="M3 5c3-3 7-3 10 0" stroke="#2b8c8c" strokeWidth="2" /><path d="M6 7l2 4 4-7" stroke="#444" strokeWidth="1.500" /></Svg>
          <Svg w={17} h={15}><path d="M3 12a3.500 3.500 0 0 1 0-7c2-4 8-4 9 0 4 0 5 6 1 7z" fill="#8b929d" stroke="none" /><path d="M2 1l13 13" stroke="#fff" strokeWidth="1.500" /></Svg>
          <Svg w={16} h={17}><path d="M7.500 1l6.500 2v5c0 4-3 6-6.500 8C4 14 1 12 1 8V3z" fill="#fff" stroke="#fff" /><path d="M7.500 2v13M2 8h11" stroke="#111" /><path d="M11 8l5 8.500H6z" fill="#fcc419" stroke="none" /><path d="M11 11v3M11 15v1" stroke="#111" /></Svg>
          <Svg w={16} h={16}><circle cx="8" cy="8" r="7.300" /><ellipse cx="8" cy="8" rx="3.300" ry="7.300" /><path d="M1 5.500h14M1 10.500h8M8 1v14" /><circle cx="12.500" cy="12" r="3.500" fill="#1c2745" /><path d="M10 14.500l5-5" /></Svg>
          <Svg w={16} h={13}><path d="M.5 4.500h2l4-4v12l-4-4h-2zM10 4.500l4.500 4.500M14.500 4.500L10 9" /></Svg>
        </div>
        <span className="ml-[10px] w-[32px] text-[12px]">ENG</span>
        <button className="w-[68px] whitespace-nowrap text-center text-[12px] leading-[18px]">15:10<br />28-09-2024</button>
        <button aria-label="Notifications" className="flex h-full w-10 items-center justify-center bg-[#262f4e]">
          <Svg w={16} h={16}><path d="M.5 1h15v11.500h-4l-3 3-3-3h-5z" /></Svg>
        </button>
        <span className="ml-2 mr-1 h-full w-px bg-[#5a6478]" />
      </div>
    </div>
  );
}

export default function App() {
  return (
    <div className="flex h-screen flex-col overflow-hidden bg-[#e6e6e6] font-['Open_Sans',sans-serif] text-[12px]">
      <TitleBar />
      <TabRow />
      <Ribbon />
      <Workspace />
      <StatusBar />
      <Taskbar />
    </div>
  );
}
